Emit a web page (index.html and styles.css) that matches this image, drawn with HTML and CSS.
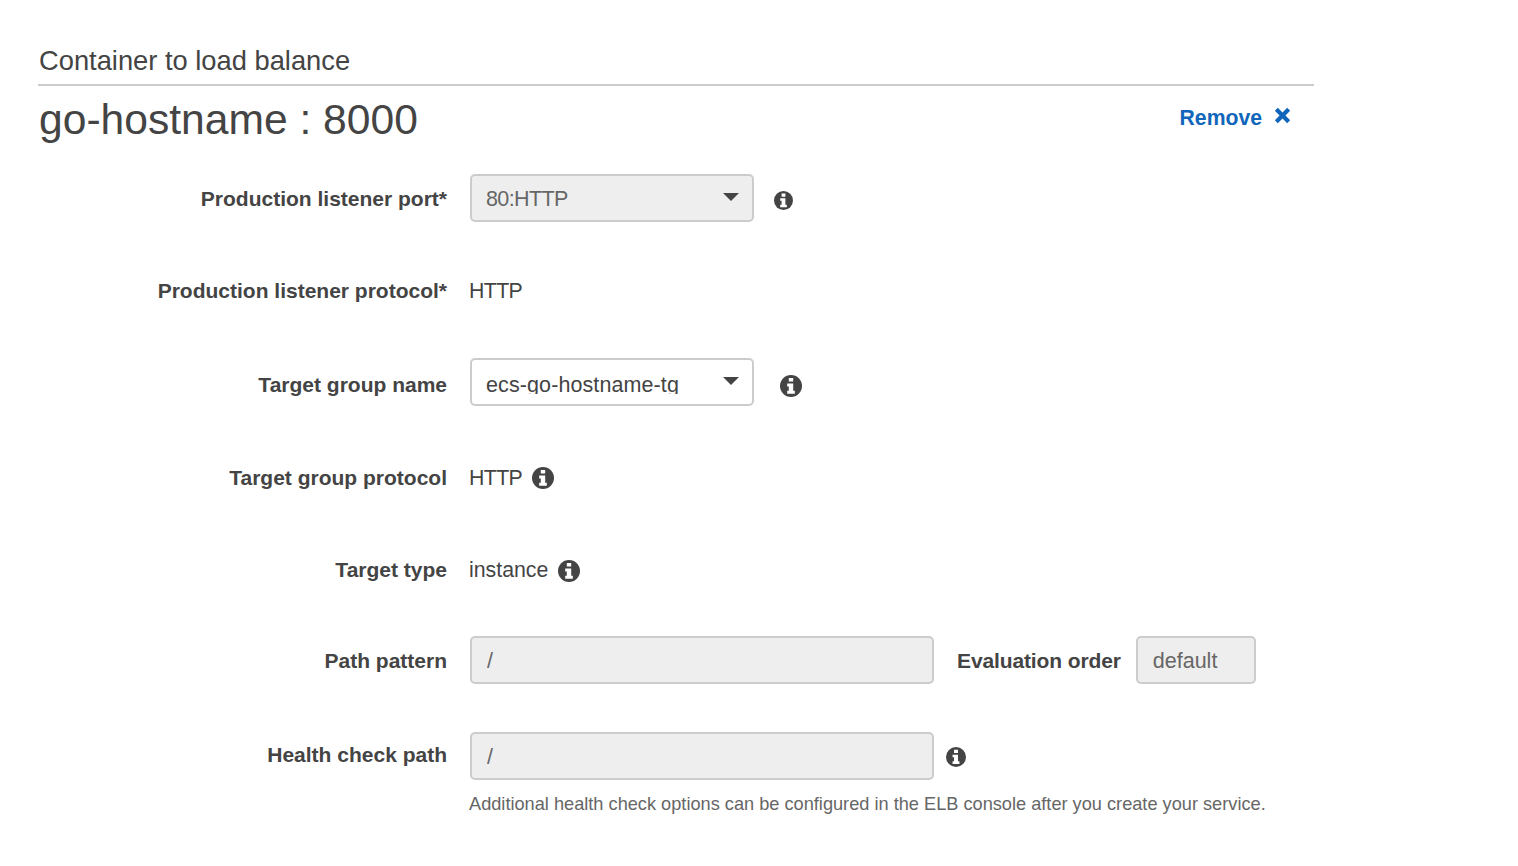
FILE: index.html
```html
<!DOCTYPE html>
<html lang="en">
  <head>
    <meta charset="UTF-8" />
    <title>Container to load balance</title>
    <link rel="stylesheet" href="styles.css">
  </head>
  <body>
    <svg class="defs" width="0" height="0">
      <symbol id="info" viewBox="0 0 22 22">
        <circle cx="11" cy="11" r="11" fill="#444" />
        <path fill="#fff" d="M8.8 3h4.4v3.6H8.8zM7.2 8.4H13.2v7.4h1.6v3H7.2v-3h1.6v-4.4H7.2z" />
      </symbol>
    </svg>
    <div class="container">
      <h4 class="section-title">Container to load balance</h4>
      <div class="container-head">
        <h2>go-hostname : 8000</h2>
        <a class="remove-link" href="#">Remove
          <svg class="remove-icon" viewBox="0 0 16 16"><path fill="#1166bb" d="M3.6 0.8 8 5.2 12.4 0.8 15.2 3.6 10.8 8 15.2 12.4 12.4 15.2 8 10.8 3.6 15.2 0.8 12.4 5.2 8 0.8 3.6z" /></svg>
        </a>
      </div>

      <div class="form-row row-port">
        <label>Production listener port*</label>
        <div class="select disabled"><span class="select-text tight">80:HTTP</span></div>
        <svg class="info info-sm"><use href="#info" /></svg>
      </div>

      <div class="form-row row-proto">
        <label>Production listener protocol*</label>
        <span class="value tight">HTTP</span>
      </div>

      <div class="form-row row-group">
        <label>Target group name</label>
        <div class="select"><span class="select-text">ecs-go-hostname-tg</span></div>
        <svg class="info info-far"><use href="#info" /></svg>
      </div>

      <div class="form-row row-gproto">
        <label>Target group protocol</label>
        <span class="value tight">HTTP</span>
        <svg class="info"><use href="#info" /></svg>
      </div>

      <div class="form-row row-type">
        <label>Target type</label>
        <span class="value">instance</span>
        <svg class="info"><use href="#info" /></svg>
      </div>

      <div class="form-row row-path">
        <label>Path pattern</label>
        <input class="input wide" type="text" value="/" disabled />
        <label class="inline-label">Evaluation order</label>
        <input class="input short" type="text" value="default" disabled />
      </div>

      <div class="form-row row-health">
        <label>Health check path</label>
        <input class="input wide" type="text" value="/" disabled />
        <svg class="info info-md"><use href="#info" /></svg>
      </div>
      <p class="help">Additional health check options can be configured in the ELB console after you create your service.</p>
    </div>
  </body>
</html>
```

FILE: styles.css
```css
body {
  font-family: "Liberation Sans", Arial, sans-serif;
  background-color: #fff;
  margin: 0;
  padding: 0;
  color: #444;
}
.defs {
  display: block;
  height: 0;
}
.container {
  width: 1276px;
  margin-left: 38px;
  padding-top: 44px;
}
.section-title {
  margin: 0;
  padding: 0 0 6px 1px;
  font-size: 27.3px;
  line-height: 34px;
  font-weight: normal;
  border-bottom: 2px solid #ccc;
}
.container-head {
  display: flex;
  justify-content: space-between;
  height: 88px;
}
h2 {
  margin: 0;
  padding-left: 1px;
  font-size: 42.6px;
  line-height: 66px;
  font-weight: normal;
}
.remove-link {
  display: flex;
  align-items: center;
  gap: 12px;
  height: 64px;
  padding-right: 23px;
  color: #1166bb;
  font-size: 21.2px;
  font-weight: bold;
  text-decoration: none;
}
.remove-icon {
  width: 17px;
  height: 17px;
  margin-bottom: 5px;
}
.form-row {
  display: flex;
  align-items: center;
  height: 48px;
  margin-bottom: 44px;
}
.row-group {
  margin-bottom: 47px;
}
.row-type {
  margin-bottom: 43px;
}
.row-path {
  margin-bottom: 48px;
}
label {
  width: 409px;
  flex: none;
  margin-right: 23px;
  padding-top: 2px;
  text-align: right;
  font-size: 21px;
  font-weight: bold;
}
.row-group label {
  padding-top: 6px;
}
.row-health label {
  padding-top: 0;
  margin-bottom: 2px;
}
.select,
.input {
  box-sizing: border-box;
  height: 48px;
  border: 2px solid #ccc;
  border-radius: 5px;
  background-color: #fff;
  color: #444;
  font-family: inherit;
  font-size: 21.5px;
}
.select {
  position: relative;
  width: 284px;
  padding: 11px 14px 0;
}
.row-group .select {
  padding-top: 13px;
}
.select::after {
  content: "";
  position: absolute;
  right: 13px;
  top: 17px;
  border-left: 8px solid transparent;
  border-right: 8px solid transparent;
  border-top: 8px solid #444;
}
.select-text {
  display: block;
  line-height: 25px;
}
/* the closed select cuts off the descenders of its value */
.row-group .select-text {
  height: 21px;
  letter-spacing: 0.1px;
  overflow: hidden;
}
.disabled,
.input {
  background-color: #eee;
  color: #666;
}
.input {
  padding: 2px 15px 0;
}
.input:disabled {
  color: #666;
}
.wide {
  width: 464px;
}
.short {
  width: 120px;
}
.inline-label {
  width: auto;
  margin: 0 15px 0 23px;
  letter-spacing: -0.12px;
}
.value {
  margin-left: -1px;
  padding-top: 2px;
  font-size: 21.3px;
}
.tight {
  letter-spacing: -0.6px;
}
.info {
  width: 22px;
  height: 22px;
  margin-left: 10px;
  margin-top: 2px;
}
.row-type .info {
  margin-top: 4px;
}
.info-sm {
  width: 19px;
  height: 19px;
  margin-left: 20px;
  margin-top: 4px;
}
.info-far {
  margin-left: 26px;
  margin-top: 8px;
}
.info-md {
  width: 20px;
  height: 20px;
  margin-left: 12px;
  margin-top: 2px;
}
.help {
  margin: -30px 0 0 431px;
  font-size: 18.2px;
  color: #666;
}
```
